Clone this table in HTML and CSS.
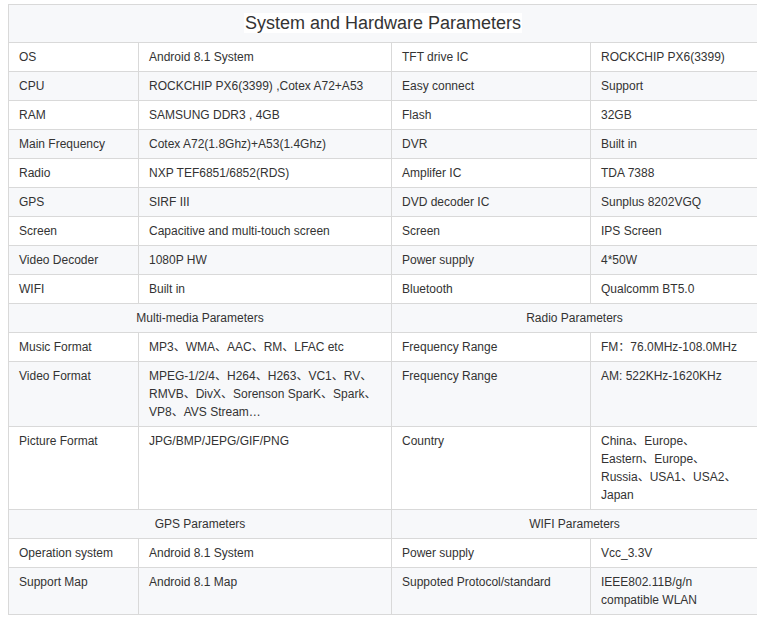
FILE: index.html
```html
<!DOCTYPE html>
<html>
<head>
<meta charset="utf-8">
<link rel="stylesheet" href="styles.css">
</head>
<body>
<table class="spec">
<colgroup>
<col class="c1"><col class="c2"><col class="c3"><col class="c4">
</colgroup>
<tr class="title-row"><td colspan="4" class="title"><span class="title-text">System and Hardware Parameters</span></td></tr>
<tr><td>OS</td><td>Android 8.1 System</td><td>TFT drive IC</td><td>ROCKCHIP PX6(3399)</td></tr>
<tr><td>CPU</td><td>ROCKCHIP PX6(3399) ,Cotex A72+A53</td><td>Easy connect</td><td>Support</td></tr>
<tr><td>RAM</td><td>SAMSUNG DDR3 , 4GB</td><td>Flash</td><td>32GB</td></tr>
<tr><td>Main Frequency</td><td>Cotex A72(1.8Ghz)+A53(1.4Ghz)</td><td>DVR</td><td>Built in</td></tr>
<tr><td>Radio</td><td>NXP TEF6851/6852(RDS)</td><td>Amplifer IC</td><td>TDA 7388</td></tr>
<tr><td>GPS</td><td>SIRF III</td><td>DVD decoder IC</td><td>Sunplus 8202VGQ</td></tr>
<tr><td>Screen</td><td>Capacitive and multi-touch screen</td><td>Screen</td><td>IPS Screen</td></tr>
<tr><td>Video Decoder</td><td>1080P HW</td><td>Power supply</td><td>4*50W</td></tr>
<tr><td>WIFI</td><td>Built in</td><td>Bluetooth</td><td>Qualcomm BT5.0</td></tr>
<tr><td colspan="2" class="section">Multi-media Parameters</td><td colspan="2" class="section">Radio Parameters</td></tr>
<tr><td>Music Format</td><td>MP3、WMA、AAC、RM、LFAC etc</td><td>Frequency Range</td><td>FM：76.0MHz-108.0MHz</td></tr>
<tr><td>Video Format</td><td>MPEG-1/2/4、H264、H263、VC1、RV、RMVB、DivX、Sorenson SparK、Spark、VP8、AVS Stream…</td><td>Frequency Range</td><td>AM: 522KHz-1620KHz</td></tr>
<tr><td>Picture Format</td><td>JPG/BMP/JEPG/GIF/PNG</td><td>Country</td><td>China、Europe、Eastern、Europe、Russia、USA1、USA2、Japan</td></tr>
<tr><td colspan="2" class="section">GPS Parameters</td><td colspan="2" class="section">WIFI Parameters</td></tr>
<tr><td>Operation system</td><td>Android 8.1 System</td><td>Power supply</td><td>Vcc_3.3V</td></tr>
<tr><td>Support Map</td><td>Android 8.1 Map</td><td>Suppoted Protocol/standard</td><td>IEEE802.11B/g/n compatible WLAN</td></tr>
</table>
</body>
</html>
```

FILE: styles.css
```css
html, body {
  background: #ffffff;
}
body {
  margin: 4px 8px 8px 8px;
  font-family: "Liberation Sans", Arial, "Noto Sans CJK SC", sans-serif;
  color: #333333;
}
.spec {
  width: 749px;
  border-collapse: collapse;
  table-layout: fixed;
  font-size: 12px;
  line-height: 18px;
}
.c1 { width: 130px; }
.c2 { width: 253px; }
.c3 { width: 199px; }
.c4 { width: 167px; }
.spec td {
  border: 1px solid #d9d9d9;
  padding: 5px 10px;
  vertical-align: top;
  text-align: left;
}
.spec tr:nth-child(odd) td {
  background: #f7f8fa;
}
.spec tr:nth-child(even) td {
  background: #ffffff;
}
.spec td.title {
  text-align: center;
  vertical-align: middle;
  padding: 7px 10px;
  height: 23px;
  font-size: 18px;
  line-height: 23px;
}
.title-text {
  background: #ffffff;
  padding: 0 1px;
}
.spec td.section {
  text-align: center;
}
```
